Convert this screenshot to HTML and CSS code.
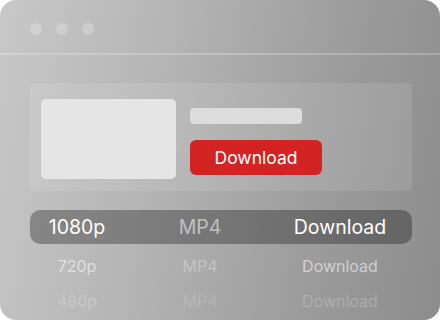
FILE: index.html
```html
<!DOCTYPE html>
<html lang="en">

<head>
    <meta charset="UTF-8">
    <meta name="viewport" content="width=device-width, initial-scale=1.0">
    <title>Downloader</title>
    <link rel="stylesheet" href="styles.css">
</head>

<body>
    <div class="window">
        <div class="titlebar">
            <span class="dot"></span>
            <span class="dot"></span>
            <span class="dot"></span>
        </div>

        <div class="content">
            <div class="preview">
                <div class="thumb"></div>
                <div class="info">
                    <div class="title-bar"></div>
                    <button class="btn-download">Download</button>
                </div>
            </div>

            <ul class="formats">
                <li class="row active">
                    <span>1080p</span>
                    <span class="type">MP4</span>
                    <span>Download</span>
                </li>
                <li class="row second">
                    <span>720p</span>
                    <span class="type">MP4</span>
                    <span>Download</span>
                </li>
                <li class="row third">
                    <span>480p</span>
                    <span class="type">MP4</span>
                    <span>Download</span>
                </li>
            </ul>
        </div>
    </div>
</body>

</html>
```

FILE: styles.css
```css
* {
    margin: 0;
    padding: 0;
    list-style: none;
    box-sizing: border-box;
    font-family: Inter, "Liberation Sans", sans-serif;
}

body {
    background-color: white;
    width: 440px;
    height: 320px;
    overflow: hidden;
}

.window {
    width: 440px;
    height: 320px;
    border-radius: 16px;
    overflow: hidden;
    background: linear-gradient(100deg, #c8c8c8 0%, #b5b5b5 35%, #9d9d9d 70%, #8c8c8c 100%);
}

.titlebar {
    height: 55px;
    display: flex;
    gap: 14px;
    padding: 23px 0 0 30px;
    border-bottom: 2px solid rgba(255, 255, 255, 0.22);
}

.dot {
    width: 12px;
    height: 12px;
    border-radius: 50%;
    background-color: rgba(255, 255, 255, 0.22);
}

.content {
    padding: 28px 28px 0 30px;
}

.preview {
    display: flex;
    gap: 14px;
    height: 108px;
    padding: 16px 11px;
    border-radius: 4px;
    background-color: rgba(255, 255, 255, 0.1);
}

.thumb {
    width: 135px;
    height: 80px;
    border-radius: 5px;
    background-color: #e5e5e5;
}

.info {
    display: flex;
    flex-direction: column;
    padding-top: 9px;
}

.title-bar {
    width: 112px;
    height: 16px;
    border-radius: 4px;
    background-color: #dcdcdc;
}

.btn-download {
    margin-top: 16px;
    width: 132px;
    height: 35px;
    border: none;
    border-radius: 6px;
    background-color: #d42323;
    color: white;
    font-size: 17.5px;
}

.formats {
    margin-top: 19px;
}

.row {
    display: grid;
    grid-template-columns: 94px 152px 128px;
    align-items: center;
    text-align: center;
    height: 35px;
    font-size: 16px;
}

.row.active {
    height: 34px;
    border-radius: 10px;
    background-color: rgba(0, 0, 0, 0.3);
    font-size: 19.5px;
    color: white;
}

.row.active .type {
    color: rgba(255, 255, 255, 0.55);
}

.row.second {
    margin-top: 4px;
    color: rgba(255, 255, 255, 0.55);
}

.row.second .type {
    color: rgba(255, 255, 255, 0.3);
}

.row.third {
    color: rgba(255, 255, 255, 0.22);
}

.row.third .type {
    color: rgba(255, 255, 255, 0.15);
}
```
